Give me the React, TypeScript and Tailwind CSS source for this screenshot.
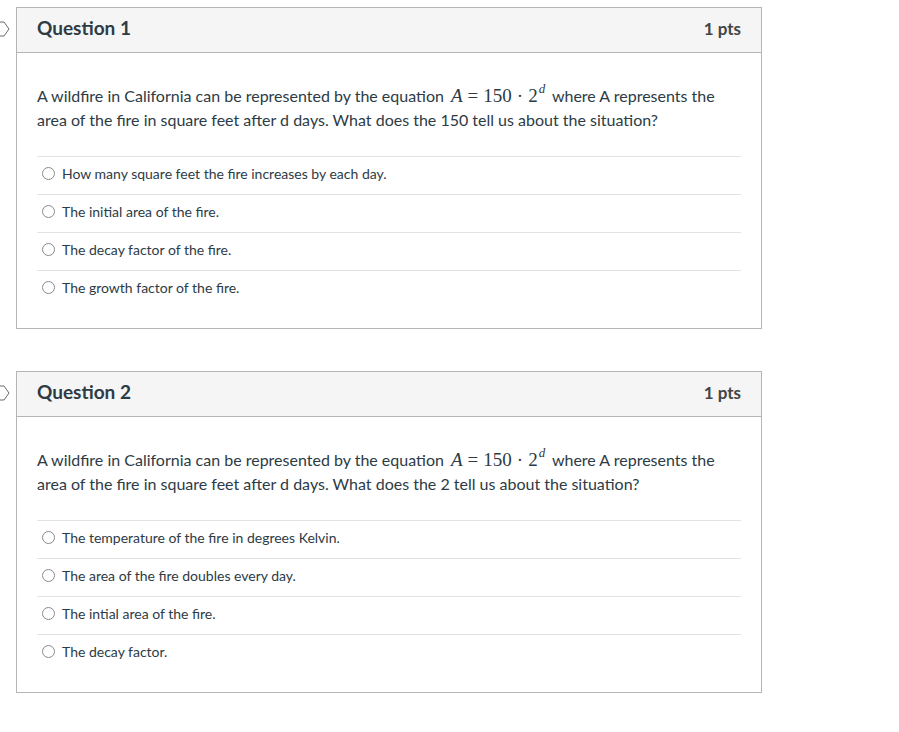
import React from "react";

const Radio = () => (
  <span className="inline-block w-[13px] h-[13px] rounded-full border border-[#8a8a8a] bg-white shrink-0" />
);

const Math = () => (
  <span className="text-[19px] leading-[24px] align-top whitespace-nowrap mx-[3px] font-['Liberation_Serif',serif]">
    <i>A</i>
    <span className="mx-[5px]">=</span>
    <span>150</span>
    <span className="mx-[5px]">·</span>
    <span>2</span>
    <sup className="italic text-[13px] leading-[0] top-[-9px] ml-[1px]">d</sup>
  </span>
);

type Q = { n: number; what: string; options: string[] };

const questions: Q[] = [
  {
    n: 1,
    what: "150",
    options: [
      "How many square feet the fire increases by each day.",
      "The initial area of the fire.",
      "The decay factor of the fire.",
      "The growth factor of the fire.",
    ],
  },
  {
    n: 2,
    what: "2",
    options: [
      "The temperature of the fire in degrees Kelvin.",
      "The area of the fire doubles every day.",
      "The intial area of the fire.",
      "The decay factor.",
    ],
  },
];

const Card = ({ q }: { q: Q }) => (
  <div className="relative w-[746px] border border-[#b5b5b5] bg-white">
    <svg className="absolute left-[-17px] top-[13px]" width="10" height="16" viewBox="0 0 10 16">
      <path d="M0 1 L4 1 L9 8 L4 15 L0 15" fill="none" stroke="#6b6b6b" strokeWidth="1" />
    </svg>
    <div className="h-[45px] bg-[#f5f5f5] border-b border-[#b5b5b5] flex items-center justify-between pl-[20px] pr-[20px] pb-[3px]">
      <span className="text-[19px] font-bold text-[#2d3b45] font-['Lato',sans-serif]">Question {q.n}</span>
      <span className="text-[17px] font-bold text-[#444] font-['Lato',sans-serif]">1 pts</span>
    </div>
    <div className="pt-[31px] pb-[20px] px-[20px] font-['Lato',sans-serif] text-[#2d3b45]">
      <div className="h-[48px] text-[16px] leading-[24px]">
        A wildfire in California can be represented by the equation <Math /> where A represents the
        <br />
        area of the fire in square feet after d days. What does the {q.what} tell us about the situation?
      </div>
      <div className="mt-[24px]">
        {q.options.map((o, i) => (
          <div key={i} className="h-[38px] border-t border-[#e2e2e2] flex items-center pl-[5px] gap-[7px] pb-[4px]">
            <Radio />
            <span className="text-[14px] text-[#2d3b45]">{o}</span>
          </div>
        ))}
      </div>
    </div>
  </div>
);

export default function App() {
  return (
    <div className="bg-white w-[899px] h-[732px] pt-[7px] pl-[16px] flex flex-col gap-[42px]">
      {questions.map((q) => (
        <Card key={q.n} q={q} />
      ))}
    </div>
  );
}
